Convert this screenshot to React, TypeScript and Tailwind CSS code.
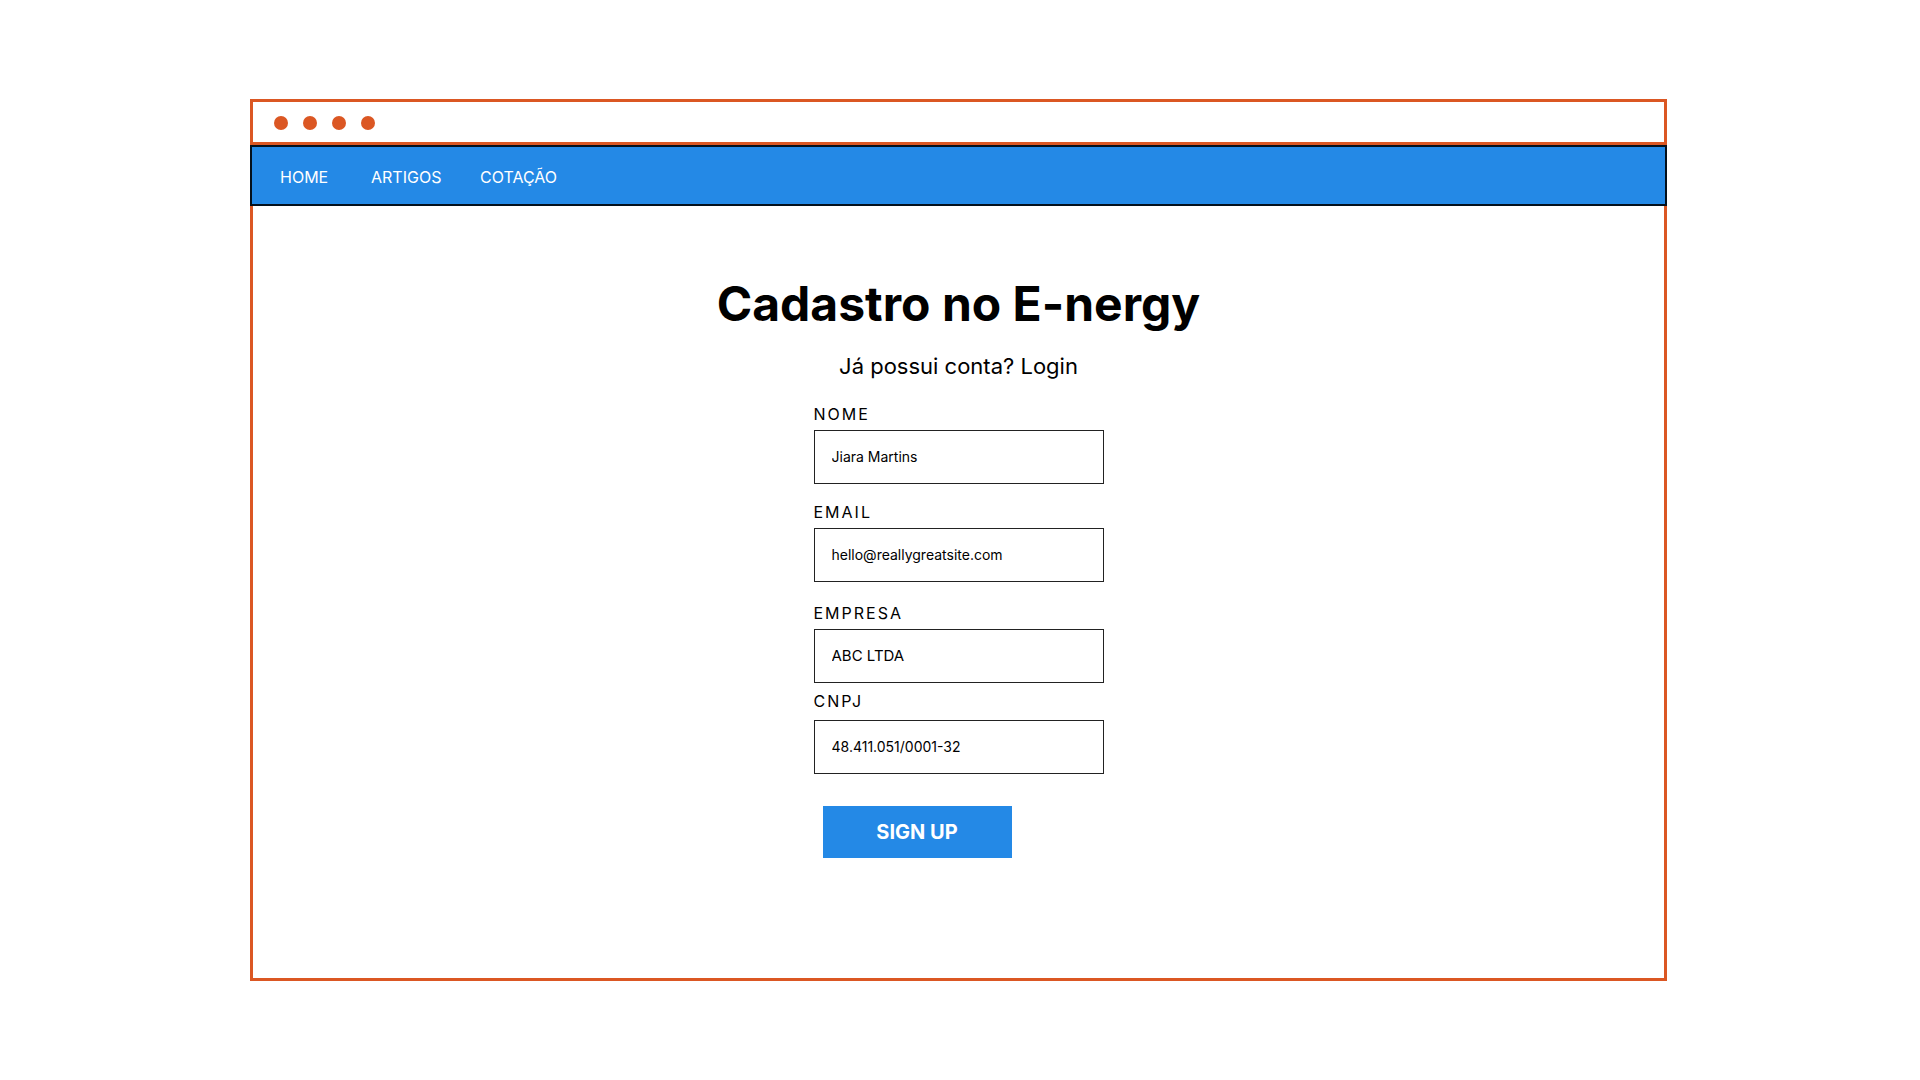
import React from "react";

const links = [
  { label: "HOME", width: "w-[91px]" },
  { label: "ARTIGOS", width: "w-[109px]" },
  { label: "COTAÇÃO", width: "w-auto" },
];

const fields = [
  { id: "nome", label: "NOME", type: "text", value: "Jiara Martins", size: "text-[14px]", space: "mb-[18px]", gap: "gap-[6px]" },
  { id: "email", label: "EMAIL", type: "email", value: "hello@reallygreatsite.com", size: "text-[14px]", space: "mb-[21px]", gap: "gap-[6px]" },
  { id: "empresa", label: "EMPRESA", type: "text", value: "ABC LTDA", size: "text-[15px]", space: "mb-[8px]", gap: "gap-[6px]" },
  { id: "cnpj", label: "CNPJ", type: "text", value: "48.411.051/0001-32", size: "text-[14px]", space: "mb-[32px]", gap: "gap-[9px]" },
];

export default function App() {
  return (
    <div className="flex min-h-screen flex-col bg-white pt-[99px] pr-[253px] pb-[99px] pl-[250px] font-['Inter',sans-serif] text-black">
      <div className="flex flex-1 flex-col">
        <div className="flex h-[46px] items-center gap-[15px] border-[3px] border-[#db5723] pt-[2px] pl-[21px]">
          {[0, 1, 2, 3].map((dot) => (
            <span key={dot} className="size-[14px] rounded-full bg-[#db5723]" />
          ))}
        </div>
        <nav className="flex h-[61px] items-center border-2 border-[#04101c] bg-[#2489e6] pt-[2px] pl-[28px] text-[16px] leading-6 text-white">
          {links.map((link) => (
            <div key={link.label} className={link.width}>
              <a href="#">{link.label}</a>
            </div>
          ))}
        </nav>
        <main className="flex flex-1 flex-col items-center border-x-[3px] border-b-[3px] border-[#db5723] pt-[66px] pb-10">
          <h1 className="text-[48px] leading-[64px] font-bold">Cadastro no E-nergy</h1>
          <p className="mt-[14px] text-[22px] leading-[32px]">
            Já possui conta? <a href="#">Login</a>
          </p>
          <form className="mt-[22px] flex w-[290px] flex-col" onSubmit={(e) => e.preventDefault()}>
            {fields.map((f) => (
              <div key={f.id} className={`flex flex-col ${f.gap} ${f.space}`}>
                <label htmlFor={f.id} className="text-[16px] leading-5 tracking-[2px]">
                  {f.label}
                </label>
                <input
                  id={f.id}
                  type={f.type}
                  defaultValue={f.value}
                  className={`h-[54px] w-full border border-[#222] bg-white px-[17px] pb-[2px] ${f.size}`}
                />
              </div>
            ))}
            <button type="submit" className="ml-[9px] h-[52px] w-[189px] bg-[#2489e6] text-[20px] font-bold text-white">
              SIGN UP
            </button>
          </form>
        </main>
      </div>
    </div>
  );
}
